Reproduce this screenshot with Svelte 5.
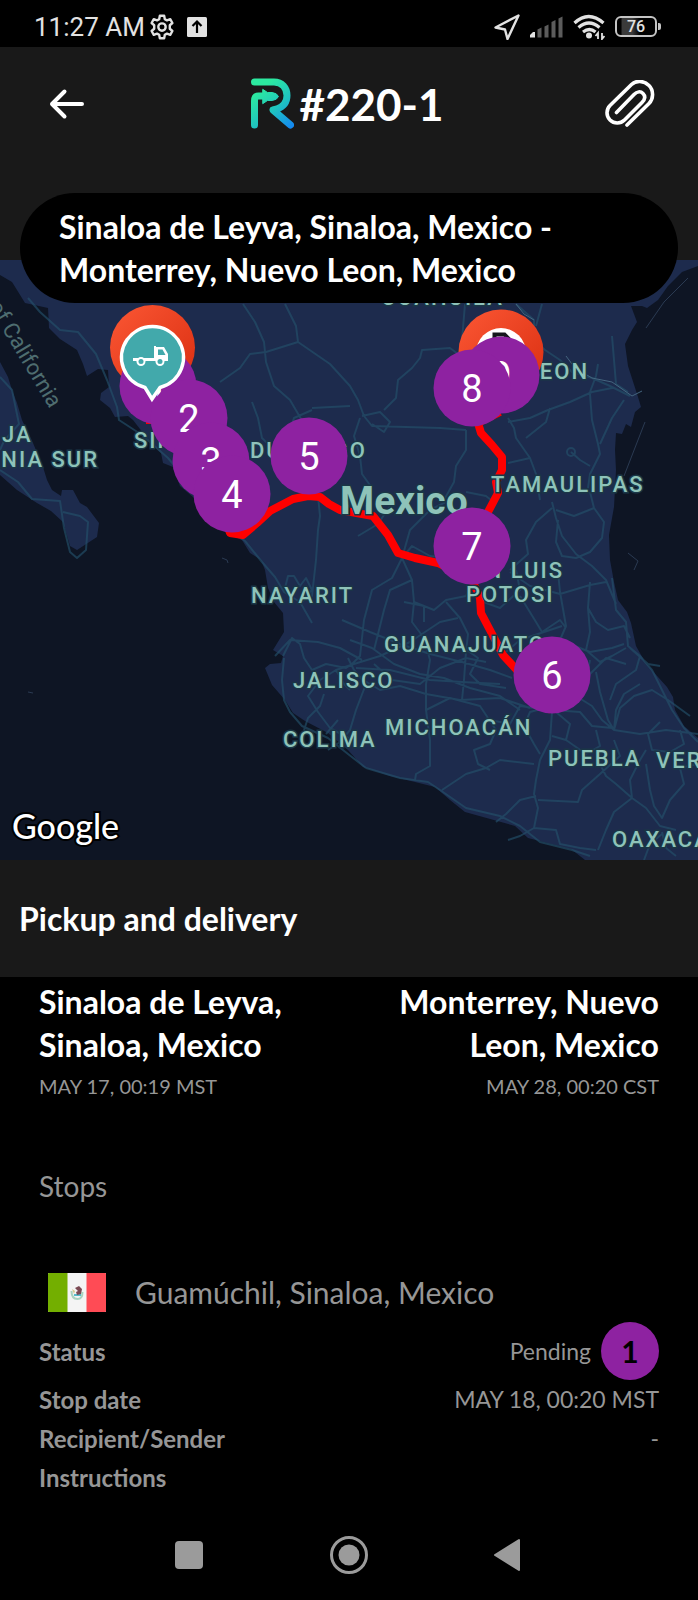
<script lang="ts">
  type Label = { text: string; x: number; y: number; end?: boolean };
  type Marker = { n: number; x: number; y: number };

  const pickup = { place: 'Sinaloa de Leyva, Sinaloa, Mexico', date: 'MAY 17, 00:19 MST' };
  const delivery = { place: 'Monterrey, Nuevo Leon, Mexico', date: 'MAY 28, 00:20 CST' };

  const labels: Label[] = [
    { text: 'JA', x: 2, y: 182 },
    { text: 'RNIA SUR', x: 99, y: 207, end: true },
    { text: 'SINALOA', x: 134, y: 188 },
    { text: 'DURANGO', x: 250, y: 198 },
    { text: 'COAHUILA', x: 381, y: 45 },
    { text: 'LEON', x: 589, y: 119, end: true },
    { text: 'TAMAULIPAS', x: 491, y: 232 },
    { text: 'SAN LUIS', x: 564, y: 318, end: true },
    { text: 'POTOSI', x: 466, y: 342 },
    { text: 'NAYARIT', x: 251, y: 343 },
    { text: 'GUANAJUATO', x: 384, y: 392 },
    { text: 'JALISCO', x: 293, y: 428 },
    { text: 'MICHOACÁN', x: 385, y: 475 },
    { text: 'COLIMA', x: 283, y: 487 },
    { text: 'PUEBLA', x: 548, y: 506 },
    { text: 'VERACRUZ', x: 656, y: 508 },
    { text: 'OAXACA', x: 612, y: 587 },
  ];

  // later markers cover earlier ones
  const markers: Marker[] = [
    { n: 1, x: 158, y: 126 },
    { n: 2, x: 189, y: 158 },
    { n: 3, x: 211, y: 201 },
    { n: 4, x: 232, y: 234 },
    { n: 5, x: 309, y: 196 },
    { n: 9, x: 501, y: 115 },
    { n: 8, x: 472, y: 128 },
    { n: 7, x: 472, y: 286 },
    { n: 6, x: 552, y: 415 },
  ];

  const roads = [
    // Baja
    'M0 117 12 130 19 164 4 181 0 190',
    'M0 210 18 222 32 239 60 241 64 268 70 292 77 298 86 290 88 262 80 256 63 252',
    // Pacific coast road
    'M28 38 40 52 60 70 78 72 96 94 107 120 117 147 119 160 142 175 168 198 185 218 215 260 245 281 262 302 275 317 284 332 300 342 312 363',
    // north and centre
    'M243 44 255 62 264 82 266 102 274 126 290 140 304 164 312 186',
    'M285 44 296 66 298 82 266 92 250 94 240 108 220 122',
    'M298 82 330 104 350 126 358 140 364 156 372 166 440 168 466 170',
    'M312 150 294 158 290 170',
    'M312 148 350 146',
    'M252 142 258 158 262 178 272 188',
    'M360 158 354 176 360 196 362 214 372 228',
    'M372 164 384 172 390 162 380 152 362 156',
    'M384 150 396 138 398 120 412 108 420 98 422 90 450 88 458 94',
    'M465 44 462 80',
    'M466 170 466 190 456 206 454 222 444 240',
    'M318 236 320 256 318 270 316 300 312 336 300 342',
    // north east
    'M516 44 534 60 534 80 545 90 560 100 572 112 592 118 610 126 630 136',
    'M542 44 536 66',
    'M508 162 530 158 548 150 570 142 592 132 612 128',
    'M508 158 514 168 516 178 530 198 536 214 540 240',
    'M550 148 546 162 526 178',
    'M530 198 508 203',
    'M590 134 592 160 598 184 600 194 590 214 588 228',
    'M624 140 612 158 600 184',
    'M612 76 614 100 616 124 628 132',
    'M590 132 596 116 598 104',
    'M571 192 580 200 590 206',
    'M567 192a4 4 0 1 0 8 0a4 4 0 1 0-8 0',
    // tamaulipas - san luis
    'M552 242 556 258 562 276 576 294 592 306 606 320 616 344',
    'M556 250 574 256 594 248 590 232',
    'M594 248 604 262 602 278 590 292 576 298 562 296 556 282 558 260',
    'M552 248 536 262 526 280 528 294 510 310',
    'M466 232 486 236 496 244',
    'M454 238 430 250 410 270 402 298 412 320 414 342',
    'M390 246 378 264 358 276',
    'M402 298 392 318 372 330 364 360 360 396 352 404',
    'M412 320 390 330 384 350 374 390',
    'M402 298 412 286 430 296 470 300 500 300',
    'M414 342 434 350 446 340 466 336 470 326',
    'M414 342 412 362 424 378 430 400 426 424 426 450 430 480 430 506 416 514 415 520',
    'M404 342 424 346 424 362',
    'M446 342 460 358 468 374 466 392 464 420 462 440',
    'M478 340 500 348 520 330 516 310',
    'M520 336 536 362 542 372 560 360 566 368',
    'M510 312 530 326 560 334 590 325 606 322',
    'M558 312 560 332 566 366 560 380',
    'M562 366 544 372 520 380 506 392',
    'M590 322 588 348 596 362 608 370 624 366 630 378',
    'M588 348 590 372 586 390 600 402 612 396 626 388',
    'M560 380 590 392 612 388 624 384',
    // gulf coast road
    'M612 318 616 350 626 362 628 386 640 396 652 410 662 430 672 450 684 468 698 482',
    'M630 388 648 404 660 406',
    'M596 412 600 432 608 460 614 470 640 474 666 470 698 474',
    'M614 470 620 448 634 436 652 430 668 440 690 456',
    'M614 470 616 450 624 434 640 424',
    'M640 396 636 410 616 424 610 440',
    'M660 462 648 474 652 490 670 492 684 484 680 470',
    // bajio
    'M342 360 370 372 400 384 430 394 462 402 490 410 512 418',
    'M354 404 380 396 410 382 440 362 458 358',
    'M350 380 372 388 394 404 420 414 444 418 470 428 500 436 520 450',
    'M348 398 354 410 366 424 356 450 350 470 340 482 328 490',
    'M360 418 380 430 400 426 426 434 460 440 500 438 530 448',
    'M356 408 390 410 430 420 462 422 500 424',
    'M374 404 392 420 420 424 440 408 466 398 486 402',
    'M464 388 478 398 470 414 480 424 506 428',
    'M354 404 336 410 320 420 308 436 318 452 330 468 352 480',
    'M426 450 450 438 480 446 496 470 490 484 474 490 478 504 490 510',
    // mexico city hub
    'M552 452 550 480 540 500 536 520 534 534 538 548 534 568 520 576 508 580',
    'M548 450 520 446 510 464 490 460',
    'M552 450 580 452 592 466 612 468',
    'M554 446 576 436 592 446 602 460 614 470',
    'M552 446 530 452 524 466 534 484 540 494',
    'M556 452 570 464 566 480 552 476',
    'M566 480 586 494 600 486 596 470',
    'M576 438 586 420 590 400',
    'M590 414 606 398 626 404',
    // guerrero and oaxaca
    'M442 530 466 514 486 508 500 500 534 504',
    'M536 536 520 540 506 554 496 562',
    'M538 540 578 542 582 530 600 514 620 496 614 480',
    'M534 568 556 570 560 584 580 588 596 590',
    'M596 496 606 516 616 524 632 538 646 548 660 566 676 570',
    'M632 538 614 552 606 570 598 590',
    'M632 538 630 520 640 500 646 490',
    'M646 504 650 530 654 546 662 558 670 540 684 524 680 508 698 504',
    'M662 572 666 588 676 596',
    'M662 574 650 584 644 600',
    // jalisco
    'M284 332 288 316 294 316 300 326 306 318 312 330 300 342',
    'M275 396 290 380 318 382 340 388 362 400',
    'M283 396 292 378 300 384 304 398 312 410 326 404 346 408 352 404',
    'M284 398 282 420 284 440 290 452 302 466 328 478 348 494 366 508',
    'M324 434 320 446 308 458 304 470',
    'M336 410 344 424 350 430',
    'M338 460 326 474',
    // southern coast
    'M366 508 400 518 428 522 440 530 466 548 500 556 520 566 540 582 572 590 590 596',
  ];
</script>

{#snippet pin(n: number, x: number, y: number)}
  <circle cx={x} cy={y} r="38.5" fill="#8e22a1" />
  <text class="pin-number" {x} y={y + 14}>{n}</text>
{/snippet}

<main class="screen">
  <div class="status-bar">
    <div class="status-side">
      <span class="clock">11:27 AM</span>
      <svg class="gear" viewBox="0 0 24 24" width="26" height="26" fill="none" stroke="#e2e2e2" stroke-width="2.2" stroke-linejoin="round">
        <path d="M10 1.6h4l.6 3.2 2 1.1 3-1.1 2 3.5-2.4 2.1v3.2l2.4 2.1-2 3.5-3-1.1-2 1.1-.6 3.2h-4l-.6-3.2-2-1.1-3 1.1-2-3.5 2.4-2.1v-3.2L2.4 8.3l2-3.5 3 1.1 2-1.1z" />
        <circle cx="12" cy="12" r="3.4" />
      </svg>
      <svg viewBox="0 0 20 20" width="20" height="20">
        <rect width="20" height="20" rx="1.5" fill="#e2e2e2" />
        <path d="M10 16V5M5.5 9 10 4.5 14.5 9" fill="none" stroke="#000" stroke-width="2.2" />
      </svg>
    </div>
    <div class="status-side">
      <svg viewBox="0 0 26 26" width="26" height="26" fill="none" stroke="#e2e2e2" stroke-width="2.4" stroke-linejoin="round">
        <path d="M24.5 1.5 1.5 13.5 11 15.5 13.5 25z" />
      </svg>
      <svg viewBox="0 0 33 22" width="33" height="22">
        <path d="M0 21.5V19l3-3h2v5.5z" fill="#e2e2e2" />
        <path d="M7.5 13.5l4-2v10h-4zM14.5 10.5l4-2v13h-4zM21.5 6l4-2v17.5h-4zM28.5 2.5l4-2v21h-4z" fill="#5c5c5c" />
      </svg>
      <svg viewBox="0 0 32 26" width="32" height="26" fill="none" stroke="#e2e2e2" stroke-width="3.2">
        <path d="M1.5 9q14-13 29 0" />
        <path d="M5.5 13.5q10.5-9 21 0" />
        <path d="M10 18q6.5-5 12.5 0" />
        <circle cx="16" cy="21.5" r="3" fill="#e2e2e2" stroke="none" />
        <path d="M25 25v-6l-2.5 3M29 19v6l2.5-3" stroke-width="1.8" />
      </svg>
      <span class="battery">76</span>
    </div>
  </div>

  <header class="top">
    <button aria-label="Back">
      <svg viewBox="0 0 36 32" width="36" height="32" fill="none" stroke="#fff" stroke-width="4" stroke-linecap="round" stroke-linejoin="round">
        <path d="M33 16H3M15.5 3.5 3 16l12.5 12.5" />
      </svg>
    </button>
    <h1>
      <svg viewBox="0 0 44 52" width="44" height="52" fill="none" stroke="url(#brand)" stroke-width="7" stroke-linecap="round" stroke-linejoin="round">
        <defs>
          <linearGradient id="brand" gradientUnits="userSpaceOnUse" x1="6" y1="8" x2="42" y2="48">
            <stop offset="0.1" stop-color="#2ceaa0" />
            <stop offset="0.55" stop-color="#1fc4c0" />
            <stop offset="1" stop-color="#1489f0" />
          </linearGradient>
        </defs>
        <path d="M4.5 4H24c8 0 13 6 13 13.5 0 7-4.5 11.5-10 13.5l-4 1L40.5 47" />
        <path d="M4.5 47V23c0-3 1-5 4-5h5" />
        <path d="M13 11.5l4.5 3h4.5q5 .5 6.500 4-1.5 3.500-6.500 4h-4.500l-4.500 3z" fill="url(#brand)" stroke-width="1" />
      </svg>
      <span>#220-1</span>
    </h1>
    <button aria-label="Attachments">
      <svg viewBox="0 0 50 48" width="50" height="48" fill="none" stroke="#fff" stroke-width="3.6" stroke-linecap="round">
        <path d="M22 45 44 23.5C48.5 19 49 10.5 44 5.5S31 0 26.5 4.5L5 25.5C1 29.5 1 36 5 40s10.5 4 14.5 0L37 22.5c3.5-3.5 3.5-6.5 1-9s-6-2-9 1L11.5 32.5" />
      </svg>
    </button>
  </header>

  <div class="route">{pickup.place} - {delivery.place}</div>

  <section class="map" aria-label="Route map">
    <svg viewBox="0 0 698 600">
      <defs>
        <linearGradient id="ember" x1="0" y1="0" x2="1" y2="1">
          <stop offset="0" stop-color="#fb5734" />
          <stop offset="1" stop-color="#d92d10" />
        </linearGradient>
      </defs>

      <rect width="698" height="600" fill="#0e1524" />
      <path
        class="land"
        d="M0 0H698V6L682 12 668 26 658 40 647 48 642 46 631 46 637 62 632 70 625 84 628 106 638 137 641 147 635 152 631 167 626 164 622 174 616 173 615 190 616 210 614 247 609 275 610 300 614 322 618 340 627 352 631 363 636 386 645 402 658 417 667 427 673 437 675 450 684 466 698 478V600H585L571 589 528 578 515 566 501 562 465 552 450 540 435 527 415 522 390 516 363 507 348 490 328 473 305 461 293 453 285 440 272 425 265 408 270 404 281 403 283 396 273 390 284 372 283 353 274 342 268 328 265 310 261 300 250 293 242 280 230 275 205 252 193 237 180 226 173 207 163 203 161 193 150 182 133 160 128 156 115 157 110 148 100 140 101 133 109 127 108 110 98 109 87 116 83 104 77 90 60 79 49 68 48 48 25 43 17 30 12 22 0 15Z"
      />
      <path
        class="land"
        d="M0 102 8 117 12 130 17 143 22 160 33 183 43 207 47 220 52 230 61 236 62 230 73 230 80 243 87 247 99 263 97 277 77 290 70 286 63 262 51 251 37 243 17 230 0 215Z"
      />
      <path class="speck" d="M222 298l5 2 1 3M28 432l5 1M628 293l10 8-4 9" />
      <path class="road" d={roads.join('')} />
      <path class="border" d="M516 44 524 54 534 60M566 96 575 108 592 118 612 122 632 136 642 131" />
      <path class="speck" d="M624 216 645 162M646 68 664 42 688 18" />

      <path
        class="path"
        d="M146 160 165 160 190 190 215 232 230 273 243 275 257 263 270 251 293 239 308 236 320 237 329 244 340 250 373 256 388 275 398 293 415 298 438 303 472 320 480 338 481 353 491 372 503 395 515 408 552 451M472 285 488 252 498 233 496 222 502 210 502 197 492 185 481 173 478 163 490 157 500 152"
      />

      <g class="labels">
        {#each labels as label}
          <text x={label.x} y={label.y} text-anchor={label.end ? 'end' : 'start'}>{label.text}</text>
        {/each}
      </g>
      <text class="country" x="340" y="254">Mexico</text>
      <text class="gulf" transform="translate(50 149) rotate(59)" text-anchor="end">Gulf of California</text>

      <circle cx="152.5" cy="87.5" r="42.5" fill="url(#ember)" />
      {@render pin(markers[0].n, markers[0].x, markers[0].y)}
      <circle cx="501" cy="92" r="42.5" fill="url(#ember)" />
      <circle cx="501" cy="93" r="25" fill="#fff" />
      <path d="M494.500 92V74.500h10l5 5V92M499 81h5" fill="none" stroke="#15171c" stroke-width="4" />
      {#each markers.slice(1) as marker}
        {@render pin(marker.n, marker.x, marker.y)}
      {/each}
      <path d="M152 139 145 127.5A31 31 0 1 1 160 127.5Z" fill="#42a9ab" stroke="#fff" stroke-width="3.5" />
      <g fill="#fff">
        <path d="M133 98h21V86h2v1h8l4 7v7h-35z" />
        <circle cx="141" cy="101.5" r="4.5" />
        <circle cx="160" cy="101.5" r="4.5" />
      </g>
      <path d="M158 89.5h4.5l3 5.5H158z" fill="#42a9ab" />
      <circle cx="141" cy="101.5" r="2.5" fill="#42a9ab" />
      <circle cx="160" cy="101.5" r="2.5" fill="#42a9ab" />

      <text class="google" x="12" y="579">Google</text>
    </svg>
  </section>

  <h2>Pickup and delivery</h2>

  <section class="details">
    <div class="ends">
      <div class="end">
        <strong>{pickup.place}</strong>
        <time>{pickup.date}</time>
      </div>
      <div class="end right">
        <strong>{delivery.place}</strong>
        <time>{delivery.date}</time>
      </div>
    </div>

    <h3>Stops</h3>

    <article>
      <div class="stop-name">
        <svg viewBox="0 0 58 39" width="58" height="39">
          <rect width="58" height="39" rx="1" fill="#f4f4f4" />
          <path d="M1 0h18.5v39H1a1 1 0 0 1-1-1V1a1 1 0 0 1 1-1z" fill="#73af00" />
          <path d="M38.5 0H57a1 1 0 0 1 1 1v37a1 1 0 0 1-1 1H38.5z" fill="#ff4b55" />
          <path d="M23.5 18q0 8 6 8 5 0 5-7" fill="none" stroke="#a9d3bf" stroke-width="2" />
          <path d="M26 22h7" stroke="#57bccb" stroke-width="2" />
          <path d="M27 15l4-2 3 3-1 5-4 1-1-3 2-1z" fill="#7b4a53" />
          <path d="M24 16l3 2-1 3z" fill="#d6c98d" />
        </svg>
        <span>Guamúchil, Sinaloa, Mexico</span>
      </div>
      <dl>
        <div class="row">
          <dt>Status</dt>
          <dd>Pending <span class="badge">1</span></dd>
        </div>
        <div class="row">
          <dt>Stop date</dt>
          <dd>MAY 18, 00:20 MST</dd>
        </div>
        <div class="row">
          <dt>Recipient/Sender</dt>
          <dd>-</dd>
        </div>
        <div class="row">
          <dt>Instructions</dt>
          <dd></dd>
        </div>
      </dl>
    </article>
  </section>

  <nav>
    <button aria-label="Recent apps">
      <svg viewBox="0 0 40 40" width="40" height="40"><rect x="6" y="6" width="28" height="28" rx="4" fill="#9b9b9b" /></svg>
    </button>
    <button aria-label="Home">
      <svg viewBox="0 0 40 40" width="40" height="40">
        <circle cx="20" cy="20" r="17.5" fill="none" stroke="#9b9b9b" stroke-width="3" />
        <circle cx="20" cy="20" r="10.5" fill="#9b9b9b" />
      </svg>
    </button>
    <button aria-label="Back">
      <svg viewBox="0 0 40 40" width="40" height="40"><path d="M30 5v30L6 20z" fill="#9b9b9b" stroke="#9b9b9b" stroke-width="2" stroke-linejoin="round" /></svg>
    </button>
  </nav>
</main>

<style>
  :global(body) {
    background: #000;
  }

  .screen {
    display: flex;
    flex-direction: column;
    min-height: 100vh;
    background: #000;
    color: #fff;
    font-family: Lato, 'Open Sans', sans-serif;
  }

  svg {
    display: block;
  }

  button {
    display: flex;
    align-items: center;
    justify-content: center;
    padding: 0;
    border: 0;
    background: none;
    cursor: pointer;
  }

  h1,
  h2,
  h3,
  dl,
  dd {
    margin: 0;
  }

  .status-bar {
    display: flex;
    align-items: center;
    justify-content: space-between;
    height: 47px;
    padding: 6px 41px 0 34px;
    box-sizing: border-box;
    color: #e2e2e2;
    font-family: Roboto, sans-serif;
  }

  .status-side {
    display: flex;
    align-items: center;
    gap: 10px;
  }

  .clock {
    font-size: 26px;
    line-height: 32px;
  }

  .gear {
    margin-left: -6px;
    margin-right: 2px;
  }

  .battery {
    position: relative;
    width: 38px;
    border: 2px solid #c4c4c4;
    border-radius: 6px;
    font-size: 16px;
    font-weight: 500;
    line-height: 17px;
    text-align: center;
    background: linear-gradient(90deg, #000 10%, #3a3a3a 14%, #3a3a3a 40%, #000 60%);
  }

  .battery::after {
    content: '';
    position: absolute;
    top: 5px;
    right: -6px;
    width: 3px;
    height: 7px;
    border-radius: 0 2px 2px 0;
    background: #c4c4c4;
  }

  .top {
    display: flex;
    align-items: center;
    justify-content: space-between;
    padding: 31px 43px 130px 49px;
    background: #191919;
  }

  h1 {
    display: flex;
    align-items: center;
    gap: 5px;
    padding-left: 4px;
    font-size: 44px;
    line-height: 52px;
    font-weight: 700;
  }

  /* lies over the header's lower edge and the top of the map */
  .route {
    position: relative;
    margin: -67px 20px -43px;
    padding: 12px 39px;
    border-radius: 56px;
    background: #000;
    font-size: 32px;
    line-height: 43px;
    font-weight: 700;
  }

  .map {
    background: #0e1524;
  }

  .map svg {
    width: 100%;
    height: auto;
  }

  .land {
    fill: #1d2b4d;
  }

  .road {
    fill: none;
    stroke: #24506a;
    stroke-width: 2;
    stroke-linejoin: round;
    opacity: 0.65;
  }

  .border,
  .speck {
    fill: none;
    stroke: #44657f;
    stroke-width: 1;
  }

  .speck {
    stroke: #2a3a52;
  }

  .path {
    fill: none;
    stroke: #ff0000;
    stroke-width: 8;
    stroke-linejoin: round;
  }

  .labels,
  .country {
    fill: #8ec3b9;
    stroke: #1a3646;
    stroke-width: 3px;
    paint-order: stroke;
    font-family: Roboto, sans-serif;
  }

  .labels {
    font-size: 22px;
    font-weight: 500;
    letter-spacing: 2px;
  }

  .country {
    font-size: 39px;
    font-weight: 700;
  }

  .gulf {
    fill: #4e6d70;
    font-family: Roboto, sans-serif;
    font-size: 22px;
  }

  .pin-number {
    fill: #fff;
    font-family: Roboto, sans-serif;
    font-size: 38px;
    text-anchor: middle;
  }

  .google {
    fill: #fff;
    stroke: #000;
    stroke-width: 4px;
    paint-order: stroke;
    font-size: 34px;
    font-weight: 500;
  }

  h2 {
    padding: 37px 19px;
    background: #191919;
    font-size: 32px;
    line-height: 43px;
    font-weight: 700;
  }

  .details {
    flex: 1;
    padding: 3px 39px 0;
    color: #969696;
  }

  .ends {
    display: flex;
    justify-content: space-between;
  }

  .end {
    width: 270px;
  }

  .end strong {
    display: block;
    color: #fff;
    font-size: 32px;
    line-height: 43px;
    font-weight: 700;
  }

  .end time {
    display: block;
    font-size: 20px;
    line-height: 40px;
  }

  .right {
    text-align: right;
  }

  h3 {
    margin-top: 60px;
    font-size: 28px;
    line-height: 40px;
    font-weight: 400;
  }

  .stop-name {
    display: flex;
    align-items: center;
    gap: 29px;
    margin-top: 66px;
    padding-left: 9px;
    font-size: 30px;
    line-height: 40px;
  }

  dl {
    margin-top: 10px;
    font-size: 23px;
    line-height: 39px;
  }

  .row {
    display: flex;
    align-items: center;
    justify-content: space-between;
  }

  dt {
    font-size: 24px;
    font-weight: 700;
  }

  dd {
    display: flex;
    align-items: center;
    gap: 10px;
  }

  .badge {
    width: 58px;
    border-radius: 50%;
    background: #8e22a1;
    color: #000;
    font-size: 30px;
    line-height: 58px;
    font-weight: 700;
    text-align: center;
  }

  nav {
    display: flex;
    justify-content: center;
    gap: 120px;
    padding: 20px 0 25px;
  }
</style>
